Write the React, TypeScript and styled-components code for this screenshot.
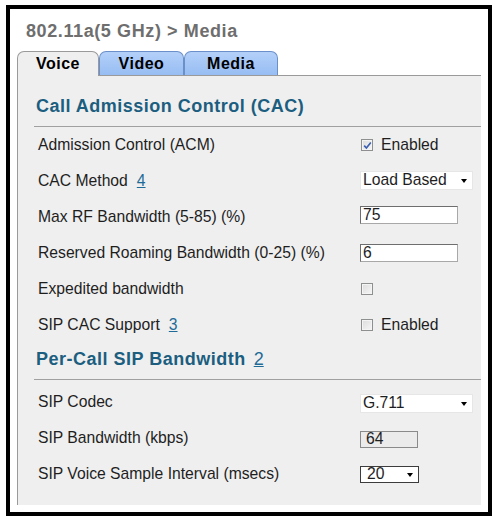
import React from "react";
import styled, { createGlobalStyle } from "styled-components";

const Global = createGlobalStyle`
  html, body { margin: 0; padding: 0; background: #fff; }
  body { font-family: "Liberation Sans", Arial, sans-serif; }
`;

const Frame = styled.div`
  margin: 5px 0 0 6px;
  width: 486px;
  height: 511px;
  box-sizing: border-box;
  border: 4px solid #000;
  background: #fff;
  padding: 12px 7px 6px 7px;
  display: flex;
  flex-direction: column;
`;

const Title = styled.div`
  font-size: 18px;
  letter-spacing: 0.6px;
  font-weight: bold;
  line-height: 20px;
  color: #6e6e6e;
  padding-left: 9px;
  margin-bottom: 10px;
`;

const TabStrip = styled.div`
  display: flex;
  height: 24px;
  align-items: flex-end;
`;

const Tab = styled.div<{ $w: number; $active?: boolean }>`
  position: relative;
  z-index: 1;
  width: ${(p) => p.$w}px;
  height: ${(p) => (p.$active ? 25 : 24)}px;
  margin-bottom: ${(p) => (p.$active ? -1 : 0)}px;
  box-sizing: border-box;
  border: 1px solid ${(p) => (p.$active ? "#9a9a9a" : "#6b90c9")};
  border-bottom: none;
  border-radius: 7px 7px 0 0;
  background: ${(p) =>
    p.$active ? "#efefef" : "linear-gradient(#b3d0f9, #97bdf3)"};
  font-size: 16px;
  letter-spacing: 0.5px;
  font-weight: bold;
  color: #000;
  text-align: center;
  line-height: 23px;
`;

const Panel = styled.div`
  height: 430px;
  box-sizing: border-box;
  background: #efefef;
  border-top: 1px solid #9a9a9a;
  border-left: 1px solid #9a9a9a;
  padding: 14px 0 13px 16px;
`;

const Header = styled.div`
  padding: 5px 0 9px 2px;
  border-bottom: 1px solid #a0a0a0;
  font-size: 18px;
  letter-spacing: 0.5px;
  font-weight: bold;
  line-height: 22px;
  color: #1b5e7f;
`;

const HeaderLink = styled.a`
  font-weight: normal;
  font-size: 18px;
  letter-spacing: 0;
  color: #1f6b98;
  text-decoration: underline;
  margin-left: 8px;
`;

const Rows = styled.div<{ $top?: number }>`
  padding-top: ${(p) => p.$top ?? 0}px;
`;

const Row = styled.div`
  display: grid;
  grid-template-columns: 326px 1fr;
  align-items: center;
  height: 36px;
`;

const Label = styled.div`
  padding-left: 4px;
  font-size: 15.7px;
  color: #1e1e1e;
`;

const Num = styled.a`
  color: #1f6b98;
  text-decoration: underline;
  margin-left: 9px;
`;

const Control = styled.div<{ $shift?: number }>`
  display: flex;
  align-items: center;
  margin-top: ${(p) => p.$shift ?? 0}px;
  font-size: 15.7px;
  color: #1e1e1e;
`;

const Box = styled.span`
  display: inline-flex;
  align-items: center;
  justify-content: center;
  width: 12px;
  height: 12px;
  box-sizing: border-box;
  margin-left: 1px;
  border: 1px solid #8e8f8f;
  background: linear-gradient(135deg, #dcdcdc, #f6f6f6);
  box-shadow: inset 0 0 0 1px #f4f4f4;
`;

const BoxText = styled.span`
  margin-left: 8px;
`;

const SelectBox = styled.div<{ $w: number; $h: number; $border?: boolean }>`
  display: flex;
  align-items: center;
  justify-content: space-between;
  width: ${(p) => p.$w}px;
  height: ${(p) => p.$h}px;
  box-sizing: border-box;
  background: #fff;
  border: 1px solid ${(p) => (p.$border ? "#3c3c3c" : "#e6e6e6")};
  padding: 0 5px 0 ${(p) => (p.$border ? 6 : 2)}px;
  font-size: 15.7px;
  color: #1e1e1e;
`;

const Arrow = styled.span`
  width: 0;
  height: 0;
  border-left: 3.5px solid transparent;
  border-right: 3.5px solid transparent;
  border-top: 4px solid #000;
  margin-top: 2px;
`;

const TextInput = styled.input<{ $w: number; $disabled?: boolean }>`
  width: ${(p) => p.$w}px;
  height: ${(p) => (p.$disabled ? 17 : 18)}px;
  box-sizing: border-box;
  margin: 0;
  padding: 0 0 0 ${(p) => (p.$disabled ? 5 : 2)}px;
  border: 1px solid #7a7a7a;
  border-color: ${(p) => (p.$disabled ? "#8a8a8a" : "#6e6e6e #a8a8a8 #a8a8a8 #6e6e6e")};
  background: ${(p) => (p.$disabled ? "#ebebeb" : "#fff")};
  font-family: "Liberation Sans", Arial, sans-serif;
  font-size: 15.7px;
  color: #1e1e1e;
  outline: none;
`;

const Check = () => (
  <svg width="9" height="9" viewBox="0 0 9 9">
    <path d="M1.2 4.6 L3.4 7 L7.8 1.4" fill="none" stroke="#3a5fb0" strokeWidth="1.6" />
  </svg>
);

const CheckBox = ({ checked, text }: { checked?: boolean; text?: string }) => (
  <Control>
    <Box>{checked && <Check />}</Box>
    {text && <BoxText>{text}</BoxText>}
  </Control>
);

export default function App() {
  return (
    <>
      <Global />
      <Frame>
        <Title>802.11a(5 GHz) &gt; Media</Title>
        <TabStrip>
          <Tab $w={82} $active>Voice</Tab>
          <Tab $w={85}>Video</Tab>
          <Tab $w={94}>Media</Tab>
        </TabStrip>
        <Panel>
          <Header>Call Admission Control (CAC)</Header>
          <Rows>
            <Row>
              <Label>Admission Control (ACM)</Label>
              <CheckBox checked text="Enabled" />
            </Row>
            <Row>
              <Label>
                CAC Method<Num>4</Num>
              </Label>
              <Control $shift={-2}>
                <SelectBox $w={113} $h={19}>
                  <span>Load Based</span>
                  <Arrow />
                </SelectBox>
              </Control>
            </Row>
            <Row>
              <Label>Max RF Bandwidth (5-85) (%)</Label>
              <Control $shift={-4}>
                <TextInput $w={98} readOnly value="75" />
              </Control>
            </Row>
            <Row>
              <Label>Reserved Roaming Bandwidth (0-25) (%)</Label>
              <Control>
                <TextInput $w={98} readOnly value="6" />
              </Control>
            </Row>
            <Row>
              <Label>Expedited bandwidth</Label>
              <CheckBox />
            </Row>
            <Row>
              <Label>
                SIP CAC Support<Num>3</Num>
              </Label>
              <CheckBox text="Enabled" />
            </Row>
          </Rows>
          <Header>
            Per-Call SIP Bandwidth<HeaderLink>2</HeaderLink>
          </Header>
          <Rows $top={4}>
            <Row>
              <Label>SIP Codec</Label>
              <Control $shift={2}>
                <SelectBox $w={113} $h={19}>
                  <span>G.711</span>
                  <Arrow />
                </SelectBox>
              </Control>
            </Row>
            <Row>
              <Label>SIP Bandwidth (kbps)</Label>
              <Control $shift={2}>
                <TextInput $w={58} $disabled readOnly value="64" />
              </Control>
            </Row>
            <Row>
              <Label>SIP Voice Sample Interval (msecs)</Label>
              <Control>
                <SelectBox $w={59} $h={17} $border>
                  <span>20</span>
                  <Arrow />
                </SelectBox>
              </Control>
            </Row>
          </Rows>
        </Panel>
      </Frame>
    </>
  );
}
